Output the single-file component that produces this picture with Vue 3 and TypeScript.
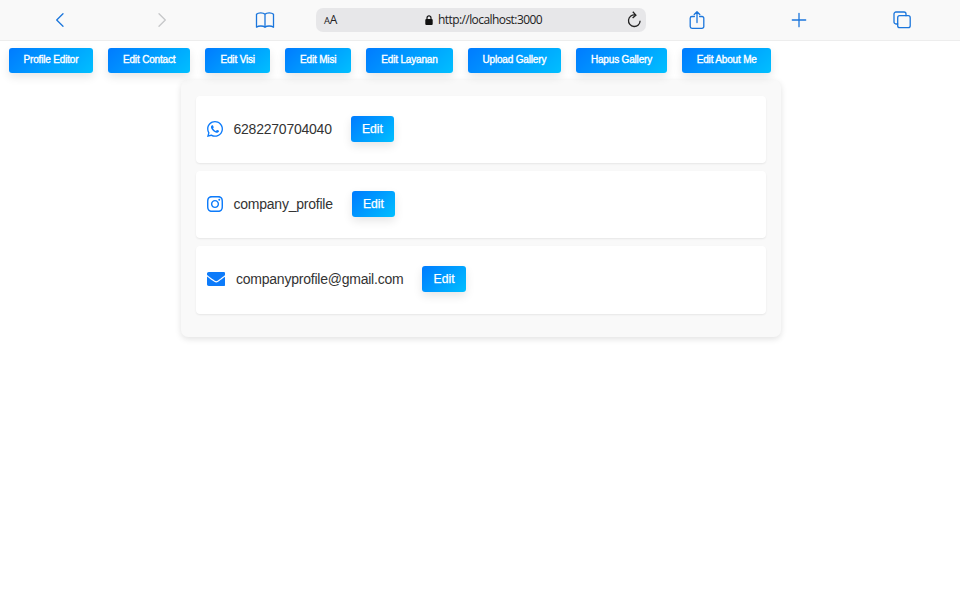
<script setup lang="ts">
interface Contact {
  kind: 'whatsapp' | 'instagram' | 'email'
  value: string
  viewBox: string
  path: string
}

interface MenuItem {
  label: string
  width: number
}

const menu: MenuItem[] = [
  { label: 'Profile Editor', width: 84.5 },
  { label: 'Edit Contact', width: 82 },
  { label: 'Edit Visi', width: 65 },
  { label: 'Edit Misi', width: 66 },
  { label: 'Edit Layanan', width: 86.5 },
  { label: 'Upload Gallery', width: 93.3 },
  { label: 'Hapus Gallery', width: 91 },
  { label: 'Edit About Me', width: 89.5 },
]

const contacts: Contact[] = [
  {
    kind: 'whatsapp',
    value: '6282270704040',
    viewBox: '0 32 448 448',
    path: 'M380.9 97.1C339 55.1 283.2 32 223.9 32c-122.4 0-222 99.6-222 222 0 39.1 10.2 77.3 29.6 111L0 480l117.7-30.9c32.4 17.7 68.9 27 106.1 27h.1c122.3 0 224.1-99.6 224.1-222 0-59.3-25.2-115-67.1-157zm-157 341.6c-33.2 0-65.7-8.9-94-25.7l-6.7-4-69.8 18.3L72 359.2l-4.4-7c-18.5-29.4-28.2-63.3-28.2-98.2 0-101.7 82.8-184.5 184.6-184.5 49.3 0 95.6 19.2 130.4 54.1 34.8 34.9 56.2 81.2 56.1 130.5 0 101.8-84.9 184.6-186.6 184.6zm101.2-138.2c-5.5-2.8-32.8-16.2-37.9-18-5.1-1.9-8.8-2.8-12.5 2.8-3.7 5.6-14.3 18-17.6 21.8-3.2 3.7-6.5 4.2-12 1.4-32.6-16.3-54-29.1-75.5-66-5.7-9.8 5.7-9.1 16.3-30.3 1.800-3.700.9-6.900-.5-9.700-1.400-2.800-12.500-30.100-17.100-41.200-4.500-10.800-9.100-9.300-12.500-9.500-3.200-.2-6.900-.2-10.600-.2-3.700 0-9.700 1.400-14.800 6.900-5.100 5.600-19.400 19-19.400 46.300 0 27.300 19.900 53.700 22.600 57.400 2.800 3.700 39.100 59.700 94.800 83.800 35.200 15.200 49 16.500 66.600 13.900 10.700-1.600 32.800-13.400 37.400-26.400 4.600-13 4.600-24.100 3.200-26.400-1.300-2.500-5-3.900-10.500-6.600z',
  },
  {
    kind: 'instagram',
    value: 'company_profile',
    viewBox: '0 32 448 448',
    path: 'M224.1 141c-63.6 0-114.9 51.3-114.9 114.9s51.3 114.9 114.9 114.9S339 319.5 339 255.9 287.7 141 224.1 141zm0 189.6c-41.1 0-74.7-33.5-74.7-74.7s33.5-74.7 74.7-74.7 74.7 33.5 74.7 74.7-33.6 74.7-74.7 74.7zm146.4-194.3c0 14.9-12 26.8-26.8 26.8-14.9 0-26.8-12-26.8-26.8s12-26.8 26.8-26.8 26.8 12 26.8 26.8zm76.1 27.2c-1.7-35.9-9.9-67.7-36.2-93.9-26.2-26.2-58-34.4-93.9-36.2-37-2.1-147.9-2.1-184.9 0-35.8 1.7-67.6 9.9-93.9 36.1s-34.4 58-36.2 93.9c-2.1 37-2.1 147.9 0 184.9 1.7 35.9 9.9 67.7 36.2 93.9s58 34.4 93.9 36.2c37 2.1 147.9 2.1 184.9 0 35.9-1.7 67.7-9.9 93.9-36.2 26.2-26.2 34.4-58 36.2-93.9 2.1-37 2.1-147.8 0-184.8zM398.8 388c-7.8 19.6-22.9 34.7-42.6 42.6-29.5 11.7-99.5 9-132.1 9s-102.7 2.6-132.1-9c-19.6-7.8-34.7-22.9-42.6-42.6-11.7-29.5-9-99.5-9-132.1s-2.6-102.7 9-132.1c7.8-19.6 22.9-34.7 42.6-42.6 29.5-11.7 99.5-9 132.1-9s102.7-2.6 132.1 9c19.6 7.8 34.7 22.9 42.6 42.6 11.7 29.5 9 99.5 9 132.1s2.7 102.7-9 132.1z',
  },
  {
    kind: 'email',
    value: 'companyprofile@gmail.com',
    viewBox: '0 64 512 384',
    path: 'M502.3 190.8c3.9-3.1 9.7-.2 9.7 4.7V400c0 26.5-21.5 48-48 48H48c-26.5 0-48-21.5-48-48V195.6c0-5 5.7-7.8 9.7-4.7 22.4 17.4 52.1 39.5 154.1 113.6 21.1 15.4 56.7 47.8 92.2 47.6 35.7.3 72-32.8 92.3-47.6 102-74.1 131.6-96.3 154-113.7zM256 320c23.2.4 56.6-29.2 73.4-41.4 132.7-96.3 142.8-104.7 173.4-128.7 5.8-4.5 9.2-11.5 9.2-18.9v-19c0-26.5-21.5-48-48-48H48c-26.5 0-48 21.5-48 48v19c0 7.4 3.4 14.3 9.2 18.9 30.6 23.9 40.7 32.4 173.4 128.7 16.8 12.2 50.2 41.8 73.4 41.4z',
  },
]
</script>

<template>
  <div class="page">
    <header class="toolbar">
      <div class="slot"><svg width="20" height="20" viewBox="0 0 20 20"><path d="M13 3.7 6.7 10l6.3 6.300" /></svg></div>
      <div class="slot muted"><svg width="20" height="20" viewBox="0 0 20 20"><path d="M7 3.7 13.3 10 7 16.3" /></svg></div>
      <div class="slot book">
        <svg width="20" height="20" viewBox="0 0 20 20"><path d="M10 4.2C8.3 2.4 3.3 2.4 1.5 4.2v13c2-1.6 6.8-1.6 8.5 0 1.7-1.6 6.5-1.6 8.5 0v-13C16.7 2.4 11.7 2.4 10 4.2v13" /></svg>
      </div>
      <div class="address">
        <span class="text-size"><small>A</small>A</span>
        <span class="url">
          <svg class="lock" width="8" height="10" viewBox="0 0 8 10"><rect x=".3" y="4" width="7.4" height="6" rx="1" /><path d="M2 4.5V2.9a2 2 0 0 1 4 0v1.600" /></svg>
          <span>http://localhost:3000</span>
        </span>
        <svg class="reload" width="16" height="18" viewBox="0 0 16 18"><path d="M9.300 4a5.800 5.800 0 1 0 4.800 5.700M6.800.8l3.100 3.300-3.300 3" /></svg>
      </div>
      <div class="slot"><svg width="20" height="20" viewBox="0 0 20 20"><path d="M7.4 6.500H5a1.800 1.800 0 0 0-1.800 1.800v8.200A1.800 1.800 0 0 0 5 18.300h10a1.800 1.800 0 0 0 1.800-1.800V8.300A1.800 1.800 0 0 0 15 6.500h-2.400M10 12.500V1.700M7.200 4.500 10 1.700l2.800 2.800" /></svg></div>
      <div class="slot"><svg width="20" height="20" viewBox="0 0 20 20"><path d="M10 3.300v13.400M3.300 10h13.400" /></svg></div>
      <div class="slot"><svg width="20" height="20" viewBox="0 0 20 20"><rect x="5.700" y="5.700" width="12.500" height="12" rx="2" /><path d="M5.700 14H4a2 2 0 0 1-2-2V4a2 2 0 0 1 2-2h8a2 2 0 0 1 2 2v1.700" /></svg></div>
    </header>

    <nav class="menu">
      <button
        v-for="item in menu"
        :key="item.label"
        class="button nav-button"
        :style="{ width: item.width + 'px' }"
      >{{ item.label }}</button>
    </nav>

    <main class="panel">
      <section v-for="contact in contacts" :key="contact.kind" class="contact">
        <svg class="icon" :class="contact.kind" :viewBox="contact.viewBox"><path :d="contact.path" /></svg>
        <span class="value">{{ contact.value }}</span>
        <button class="button edit-button">Edit</button>
      </section>
    </main>
  </div>
</template>

<style>
body {
  background: #fff;
}
</style>

<style scoped>
.page {
  width: 960px;
  height: 600px;
  overflow: hidden;
  font-family: "Liberation Sans", Arial, sans-serif;
}
.toolbar {
  display: grid;
  grid-template-columns: 112px 98px 106px 330px 102px 102px 104px;
  align-items: center;
  height: 41px;
  padding-bottom: 1px;
  box-sizing: border-box;
  border-bottom: 1px solid #ededed;
  background: #f9f9f9;
}
.slot {
  display: flex;
  justify-content: center;
  color: #1b76dc;
}
.slot:first-child {
  padding-left: 8px;
}
.slot.book {
  padding-left: 3px;
}
.slot.muted {
  padding-left: 2px;
  color: #c6c7c9;
}
.slot svg {
  fill: none;
  stroke: currentColor;
  stroke-width: 1.3;
  stroke-linecap: round;
  stroke-linejoin: round;
}
.address {
  display: flex;
  align-items: center;
  justify-content: space-between;
  height: 24px;
  padding: 0 4px 0 8px;
  box-sizing: border-box;
  border-radius: 7px;
  background: #e7e7e9;
  color: #222;
  font-family: "Open Sans", "Noto Sans", sans-serif;
  font-size: 12px;
}
.text-size {
  width: 16px;
  letter-spacing: -0.3px;
}
.text-size small {
  font-size: 9.5px;
}
.url {
  display: flex;
  align-items: center;
  gap: 5px;
  padding-left: 1px;
  white-space: nowrap;
  letter-spacing: -0.57px;
}
.lock {
  fill: #111;
  stroke: #111;
}
.lock path {
  fill: none;
  stroke-width: 1.2;
}
.lock rect {
  stroke: none;
}
.reload {
  fill: none;
  stroke: #222;
  stroke-width: 1.3;
}
.menu {
  display: flex;
  gap: 15px;
  padding: 6.5px 8.7px 0;
}
.button {
  flex: none;
  padding: 0;
  border: 0;
  border-radius: 3px;
  color: #fff;
  background: linear-gradient(135deg, #007bff, #00bfff);
  box-shadow: 0 4px 10px rgba(0, 0, 0, 0.1);
  font-family: inherit;
  white-space: nowrap;
}
.nav-button {
  position: relative;
  height: 25.5px;
  padding-bottom: 2px;
  font-size: 10px;
  letter-spacing: -0.17px;
  -webkit-text-stroke: 0.35px #fff;
}
.panel {
  display: flex;
  flex-direction: column;
  gap: 8px;
  width: 600.5px;
  height: 257px;
  margin: 7px 0 0 180.5px;
  padding: 15.5px 15px;
  box-sizing: border-box;
  border-radius: 7px;
  background: #f9f9f9;
  box-shadow: 0 2px 6px rgba(0, 0, 0, 0.12);
}
.contact {
  display: flex;
  align-items: center;
  height: 67.4px;
  padding: 0 11px 1px;
  box-sizing: border-box;
  border-radius: 4px;
  background: #fff;
  box-shadow: 0 1px 2px rgba(0, 0, 0, 0.08);
}
.icon {
  width: 16px;
  height: 16px;
  margin-right: 11px;
  fill: #0d7bfa;
}
.icon.email {
  width: 18.5px;
  height: 14px;
}
.value {
  margin-right: 19px;
  color: #333;
  font-size: 14px;
  letter-spacing: -0.23px;
}
.edit-button {
  width: 43.3px;
  height: 26px;
  font-size: 12.2px;
  -webkit-text-stroke: 0.25px #fff;
}
</style>
